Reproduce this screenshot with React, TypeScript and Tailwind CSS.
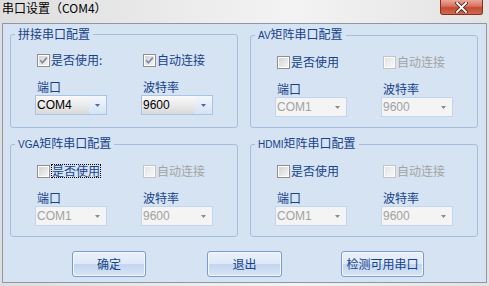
import type { ReactNode } from 'react';

const CJK = "font-['Noto_Sans_CJK_SC','Microsoft_YaHei',sans-serif]";
const LATIN = "font-['Liberation_Sans','Noto_Sans_CJK_SC',sans-serif]";

function CheckBox({ checked, disabled }: { checked?: boolean; disabled?: boolean }) {
  return (
    <span
      className={`flex h-[13px] w-[13px] shrink-0 border p-px ${
        disabled ? 'border-[#c4c4c4] bg-[#fbfbfb]' : 'border-[#8f8f8f] bg-white'
      }`}
    >
      <span
        className={`flex h-full w-full items-center justify-center ${
          disabled
            ? 'bg-[linear-gradient(135deg,#e4e4e4,#f7f7f7)]'
            : 'bg-[linear-gradient(135deg,#d3d3d3,#f4f4f4)]'
        }`}
      >
        {checked && (
          <svg width="9" height="9" viewBox="0 0 9 9">
            <polyline points="1.2,4.3 3.4,6.8 7.8,1.6" fill="none" stroke="#7d8ca3" strokeWidth="1.7" />
          </svg>
        )}
      </span>
    </span>
  );
}

function Combo({ value, enabled }: { value: string; enabled?: boolean }) {
  return (
    <div
      className={`flex h-[20px] w-[72px] border ${
        enabled ? 'border-[#a9c3e3]' : 'border-[#c3d5ec] bg-[#f4f4f4]'
      }`}
    >
      <div
        className={`flex flex-1 items-center pl-[1px] text-[12px] ${LATIN} ${
          enabled
            ? 'bg-[linear-gradient(180deg,#fafafa_0%,#ececec_45%,#d9d9d9_100%)] text-black'
            : 'text-[#a2a2a2]'
        }`}
      >
        {value}
      </div>
      <div
        className={`flex w-[17px] items-center justify-center ${
          enabled ? 'bg-[linear-gradient(180deg,#f3f7fd,#d5e3f5)]' : ''
        }`}
      >
        <svg width="5" height="3" viewBox="0 0 5 3">
          <polygon points="0,0 5,0 2.5,3" fill={enabled ? '#4d6b99' : '#8a8a8a'} />
        </svg>
      </div>
    </div>
  );
}

function Group({
  prefix,
  title,
  used,
  auto,
  port,
  usedLabel = '是否使用',
  enabled,
  focused,
}: {
  prefix?: string;
  title: string;
  used?: boolean;
  auto?: boolean;
  port: string;
  usedLabel?: string;
  enabled?: boolean;
  focused?: boolean;
}) {
  return (
    <fieldset className="w-[228px] rounded-[3px] border border-[#a6bddb] pb-[10px]">
      <legend className={`ml-1 px-[3px] text-[12px] leading-[14px] text-[#15428b] ${CJK}`}>
        {prefix && <span className={`text-[10px] ${LATIN}`}>{prefix}</span>}
        {title}
      </legend>
      <div className={`grid grid-cols-[106px_72px] pl-[24px] pt-[12px] text-[12px] leading-[14px] ${CJK}`}>
        <label className="ml-[2px] flex h-[14px] items-center gap-[1px] text-[#15428b]">
          <CheckBox checked={used} />
          <span className={focused ? 'border border-dotted border-black leading-[12px]' : ''}>{usedLabel}</span>
        </label>
        <label
          className={`ml-[2px] flex h-[14px] items-center gap-[1px] ${enabled ? 'text-[#15428b]' : 'text-[#a3a3a3]'}`}
        >
          <CheckBox checked={auto} disabled={!enabled} />
          <span>自动连接</span>
        </label>
        <span className="ml-[2px] mt-[13px] text-[#15428b]">端口</span>
        <span className="ml-[2px] mt-[13px] text-[#15428b]">波特率</span>
        <div className="mt-[1px]">
          <Combo value={port} enabled={enabled} />
        </div>
        <div className="mt-[1px]">
          <Combo value="9600" enabled={enabled} />
        </div>
      </div>
    </fieldset>
  );
}

function Button({ children, width, className = '' }: { children: ReactNode; width: string; className?: string }) {
  return (
    <button
      className={`flex h-[26px] items-center justify-center rounded-[3px] border border-[#7b9bcf] bg-[linear-gradient(180deg,#eaf1fb_0%,#dfe9f7_48%,#c3d6ef_52%,#d7e4f5_100%)] text-[12px] text-[#15428b] shadow-[inset_0_0_0_1px_#f4f8fd] ${CJK} ${width} ${className}`}
    >
      {children}
    </button>
  );
}

export default function App() {
  return (
    <div className="flex h-[286px] w-[489px] flex-col bg-[linear-gradient(90deg,#dedede_0%,#eeeeee_45%,#f3f3f3_60%,#e3e3e3_100%)]">
      <div className="flex h-[23px] items-start">
        <span className={`pl-[2px] pt-[1px] text-[12px] leading-[14px] text-black ${CJK}`}>串口设置（COM4）</span>
        <div className="ml-auto mr-[6px] flex h-[15px] w-[43px] items-center justify-center rounded-b-[3px] border border-t-0 border-[#8b2e22] bg-[linear-gradient(180deg,#e9a89a_0%,#d8705c_45%,#c44a32_55%,#d06a50_100%)]">
          <svg width="13" height="11" viewBox="0 0 13 11">
            <path
              d="M2 1 L6.5 5.5 L11 1 M2 10 L6.5 5.5 L11 10"
              stroke="#4a2a24"
              strokeWidth="3.6"
              fill="none"
              strokeLinecap="square"
            />
            <path
              d="M2 1 L6.5 5.5 L11 1 M2 10 L6.5 5.5 L11 10"
              stroke="#ffffff"
              strokeWidth="1.8"
              fill="none"
              strokeLinecap="square"
            />
          </svg>
        </div>
      </div>

      <div className="mx-[2px] flex h-[260px] w-[485px] flex-col border border-[#8d98a6] bg-[#d6e3f2] pl-[7px] pr-[8px] pt-[3px]">
        <div className="flex gap-[12px]">
          <Group title="拼接串口配置" used auto enabled port="COM4" usedLabel="是否使用:" />
          <Group prefix="AV" title="矩阵串口配置" port="COM1" />
        </div>
        <div className="mt-[8px] flex gap-[12px]">
          <Group prefix="VGA" title="矩阵串口配置" port="COM1" focused />
          <Group prefix="HDMI" title="矩阵串口配置" port="COM1" />
        </div>
        <div className="mt-[14px] flex pl-[62px]">
          <Button width="w-[74px]">确定</Button>
          <Button width="w-[75px]" className="ml-[61px]">
            退出
          </Button>
          <Button width="w-[83px]" className="ml-[59px]">
            检测可用串口
          </Button>
        </div>
      </div>
    </div>
  );
}
